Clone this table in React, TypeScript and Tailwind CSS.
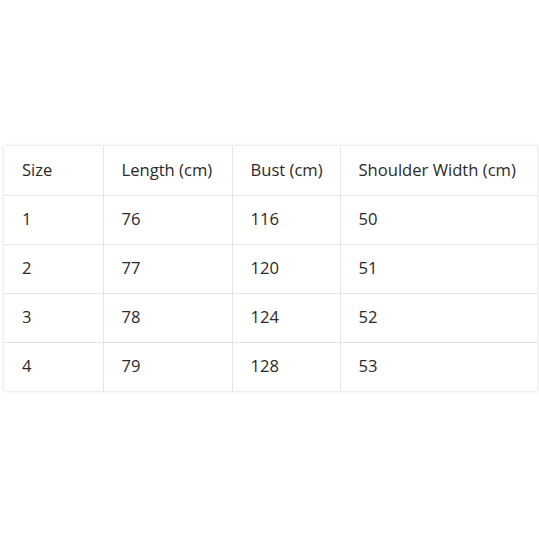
const rows = [
  ["1", "76", "116", "50"],
  ["2", "77", "120", "51"],
  ["3", "78", "124", "52"],
  ["4", "79", "128", "53"],
]

const headers = ["Size", "Length (cm)", "Bust (cm)", "Shoulder Width (cm)"]
const widths = ["w-[99px]", "w-[129px]", "w-[108px]", "w-[197px]"]

export default function App() {
  return (
    <div className="flex h-[539px] w-[539px] items-center bg-white font-['Open_Sans',sans-serif] text-[16.6px] text-[#2a2a2a]">
      <div className="mb-[2px] ml-[4px] w-[533px] shadow-[0_0_3px_rgba(0,0,0,0.18)]">
        <table className="w-full table-fixed border-collapse">
          <colgroup>
            {widths.map((w, i) => (
              <col key={i} className={w} />
            ))}
          </colgroup>
          <thead>
            <tr className="h-[49px]">
              {headers.map((h, i) => (
                <th
                  key={h}
                  className={`pl-[18px] text-left font-normal ${i > 0 ? "border-l border-[#e6e6e6]" : ""}`}
                >
                  {h}
                </th>
              ))}
            </tr>
          </thead>
          <tbody>
            {rows.map((r) => (
              <tr key={r[0]} className="h-[49px] border-t border-[#e6e6e6]">
                {r.map((c, i) => (
                  <td
                    key={i}
                    className={`pl-[18px] ${i > 0 ? "border-l border-[#e6e6e6]" : ""}`}
                  >
                    {c}
                  </td>
                ))}
              </tr>
            ))}
          </tbody>
        </table>
      </div>
    </div>
  )
}
